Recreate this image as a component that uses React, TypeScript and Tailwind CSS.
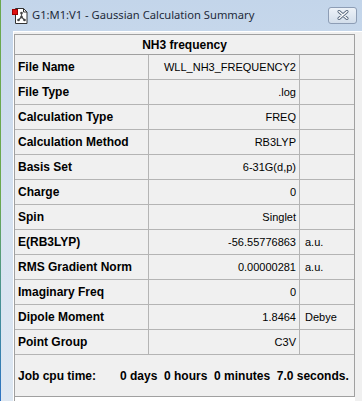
const rows: { label: string; value: string; unit?: string }[] = [
  { label: "File Name", value: "WLL_NH3_FREQUENCY2" },
  { label: "File Type", value: ".log" },
  { label: "Calculation Type", value: "FREQ" },
  { label: "Calculation Method", value: "RB3LYP" },
  { label: "Basis Set", value: "6-31G(d,p)" },
  { label: "Charge", value: "0" },
  { label: "Spin", value: "Singlet" },
  { label: "E(RB3LYP)", value: "-56.55776863", unit: "a.u." },
  { label: "RMS Gradient Norm", value: "0.00000281", unit: "a.u." },
  { label: "Imaginary Freq", value: "0" },
  { label: "Dipole Moment", value: "1.8464", unit: "Debye" },
  { label: "Point Group", value: "C3V" },
];

function AppIcon() {
  return (
    <svg width="18" height="18" viewBox="0 0 18 18">
      <path d="M3.5 1.5h8l3.5 3.5v11.5h-11.5z" fill="#fff" stroke="#333" />
      <path d="M11.5 1.5v3.5h3.5" fill="none" stroke="#333" />
      <rect x="0.5" y="2.5" width="5" height="5" fill="#e01010" stroke="#900" />
      <g stroke="#555" strokeWidth="1.2" fill="none">
        <path d="M9.5 6v4M9.5 10l-3 3M9.5 10l3 3" />
      </g>
      <circle cx="9.5" cy="6" r="1.3" fill="#444" />
      <circle cx="9.5" cy="10" r="1.3" fill="#444" />
      <circle cx="6.5" cy="13" r="1.3" fill="#444" />
      <circle cx="12.5" cy="13" r="1.3" fill="#444" />
    </svg>
  );
}

function CloseButton() {
  return (
    <div className="flex h-[17px] w-[29px] items-center justify-center rounded-[3px] border border-[#8d9db5] bg-gradient-to-b from-[#edf2f8] to-[#d3deeb]">
      <svg width="12" height="10" viewBox="0 0 12 10">
        <path d="M2 1.5l8 7M10 1.5l-8 7" stroke="#56667c" strokeWidth="3" strokeLinecap="round" />
        <path d="M2 1.5l8 7M10 1.5l-8 7" stroke="#fff" strokeWidth="1.4" strokeLinecap="round" />
      </svg>
    </div>
  );
}

export default function App() {
  return (
    <div className="relative h-[401px] w-[362px] overflow-hidden bg-gradient-to-b from-[#c3d5ea] via-[#d6e2f0] to-[#dde7f2] font-['Liberation_Sans',Arial,sans-serif] text-black">
      <div className="absolute inset-y-0 left-0 w-[1px] bg-gradient-to-b from-[#6aa84f] via-[#6aa84f] to-[#2d72c4]" />
      <div className="flex h-[31px] items-center pl-[12px] pr-[5px]">
        <AppIcon />
        <span className="ml-[2px] font-['Noto_Sans',sans-serif] text-[11.2px] text-[#1e2a3a]">
          G1:M1:V1 - Gaussian Calculation Summary
        </span>
        <div className="ml-auto -mt-[1px]">
          <CloseButton />
        </div>
      </div>
      <div className="ml-[13px] h-full border-l border-t border-white bg-[#f0f0f0] pt-[2px]">
        <div className="w-[341px] border border-[#a0a0a0]">
          <div className="flex h-[20px] items-center justify-center border-b border-[#a0a0a0] text-[12px] font-bold">
            NH3 frequency
          </div>
          <div className="grid grid-cols-[134px_151px_1fr]">
            {rows.map((r) => (
              <div key={r.label} className="contents">
                <div className="flex h-[25px] items-center border-b border-r border-[#b4b4b4] pl-[3px] text-[12px] font-bold">
                  {r.label}
                </div>
                <div className="flex h-[25px] items-center justify-end border-b border-r border-[#b4b4b4] pr-[3px] text-[11px]">
                  {r.value}
                </div>
                <div className="flex h-[25px] items-center border-b border-[#b4b4b4] pl-[5px] text-[11px]">
                  {r.unit}
                </div>
              </div>
            ))}
          </div>
          <div className="flex h-[41px] items-center whitespace-pre pl-[3px] text-[12px] font-bold">
            <span className="w-[102px]">Job cpu time:</span>
            <span>0 days  0 hours  0 minutes  7.0 seconds.</span>
          </div>
        </div>
        <div className="h-[20px] w-[341px] border-l border-[#a0a0a0] bg-white" />
      </div>
    </div>
  );
}
